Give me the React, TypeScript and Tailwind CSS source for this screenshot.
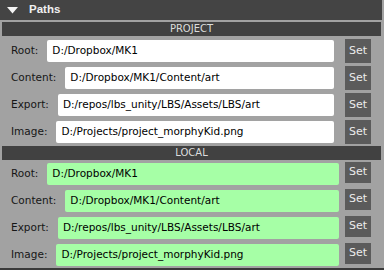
import React from "react";

const font = { fontFamily: '"DejaVu Sans", Verdana, sans-serif' };

type Row = { label: string; value: string };

const rows: Row[] = [
  { label: "Root:", value: "D:/Dropbox/MK1" },
  { label: "Content:", value: "D:/Dropbox/MK1/Content/art" },
  { label: "Export:", value: "D:/repos/lbs_unity/LBS/Assets/LBS/art" },
  { label: "Image:", value: "D:/Projects/project_morphyKid.png" },
];

function Section({ title, green }: { title: string; green?: boolean }) {
  return (
    <div className="flex flex-col">
      <div className="ml-[2px] mr-[3px] h-[14px] bg-[#414141] flex items-center justify-center text-[10px] leading-none text-[#dcdcdc]">
        {title}
      </div>
      <div className={"flex flex-col gap-[5px] " + (green ? "pt-[3px]" : "pt-[4px] pb-[3px]")}>
        {rows.map((r) => (
          <div key={r.label} className="flex items-start h-[22px] pl-[11px] pr-[13px]">
            <span className="h-[22px] flex items-center text-[10.5px] text-[#161616] mr-[9px] whitespace-nowrap">
              {r.label}
            </span>
            <div
              className={
                "flex-1 h-[22px] rounded-[2px] flex items-center pl-[5px] text-[10.5px] text-black whitespace-nowrap overflow-hidden " +
                (green ? "bg-[#a6ffa6] mr-[6px]" : "bg-white mr-[11px]")
              }
            >
              {r.value}
            </div>
            <div
              className={
                "w-[26px] -mt-[1px] bg-[#5b5b5b] flex items-center justify-center text-[11px] text-[#ececec] " +
                (green ? "h-[21px]" : "h-[24px]")
              }
            >
              Set
            </div>
          </div>
        ))}
      </div>
    </div>
  );
}

export default function App() {
  return (
    <div style={font} className="w-[384px] h-[270px] bg-[#a2a2a2] flex flex-col overflow-hidden">
      <div className="h-[20px] shrink-0 mr-[2px] bg-[#444444] flex items-center pl-[7px]">
        <svg width="11" height="7" viewBox="0 0 11 7" className="mr-[11px]">
          <polygon points="0,0 11,0 5.5,6.5" fill="#f4f4f4" />
        </svg>
        <span
          style={{ fontFamily: '"Liberation Sans", Arial, sans-serif' }}
          className="text-[11.5px] font-bold text-[#f0f0f0]"
        >
          Paths
        </span>
      </div>
      <div className="h-[2px] shrink-0" />
      <Section title="PROJECT" />
      <Section title="LOCAL" green />
      <div className="flex-1" />
      <div className="h-[2px] shrink-0 bg-[#3a3a3a]" />
    </div>
  );
}
